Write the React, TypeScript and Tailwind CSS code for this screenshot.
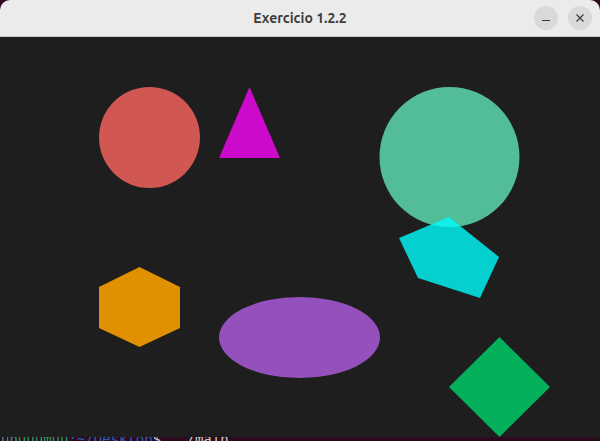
import React from "react";

export default function App() {
  return (
    <div className="w-[600px] h-[441px] bg-[#2c0a20] flex flex-col overflow-hidden" style={{ fontFamily: "Ubuntu, 'Noto Sans', sans-serif" }}>
      <div className="h-[36px] bg-[#ebebeb] rounded-t-[10px] flex items-center relative shrink-0">
        <div className="flex-1 text-center text-[14px] font-bold text-[#3d3d3d]">Exercicio 1.2.2</div>
        <div className="absolute right-[8px] top-[6px] flex gap-[10px]">
          <div className="w-[24px] h-[24px] rounded-full bg-[#d9d9d9] flex items-center justify-center">
            <div className="w-[8px] h-[1.5px] bg-[#3a3a3a] mt-[5px]" />
          </div>
          <div className="w-[24px] h-[24px] rounded-full bg-[#d9d9d9] flex items-center justify-center">
            <svg width="10" height="10" viewBox="0 0 10 10">
              <path d="M1.5 1.5 L8.5 8.5 M8.5 1.5 L1.5 8.5" stroke="#3a3a3a" strokeWidth="1.2" />
            </svg>
          </div>
        </div>
      </div>
      <div className="h-[1px] bg-[#c8c8c8] shrink-0" />
      <div className="h-[400px] bg-[#1e1e1e] shrink-0">
        <svg width="600" height="400" viewBox="0 37 600 400">
          <defs>
            <clipPath id="tealc">
              <circle cx="449.5" cy="157" r="70" />
            </clipPath>
          </defs>
          <circle cx="149.5" cy="137.5" r="50.5" fill="#d15752" />
          <polygon points="249.5,87 219,158 280,158" fill="#cc0acc" />
          <circle cx="449.5" cy="157" r="70" fill="#52bd98" />
          <polygon points="449,217 399,238 418,278 480,298 499,257" fill="#05cfcf" />
          <polygon points="449,217 399,238 418,278 480,298 499,257" fill="#12efe6" clipPath="url(#tealc)" />
          <polygon points="139.5,267 180,287 180,328 139.5,347 99,328 99,287" fill="#e09000" />
          <ellipse cx="299.5" cy="337.5" rx="80.5" ry="40.5" fill="#9551bb" />
          <polygon points="499.5,337 550,387 499.5,437 449,387" fill="#05b05c" />
        </svg>
      </div>
      <div className="h-[4px] overflow-hidden text-[14px] leading-[14px] whitespace-pre pl-[1px]" style={{ fontFamily: "'DejaVu Sans Mono', monospace" }}>
        <div className="mt-[-5px] flex">
          <span className="text-[#26a269]">unuuumuu</span>
          <span className="text-[#2a5fb0]">:~/Desktop</span>
          <span className="text-[#d0d0d0]">$  ./main</span>
        </div>
      </div>
    </div>
  );
}
